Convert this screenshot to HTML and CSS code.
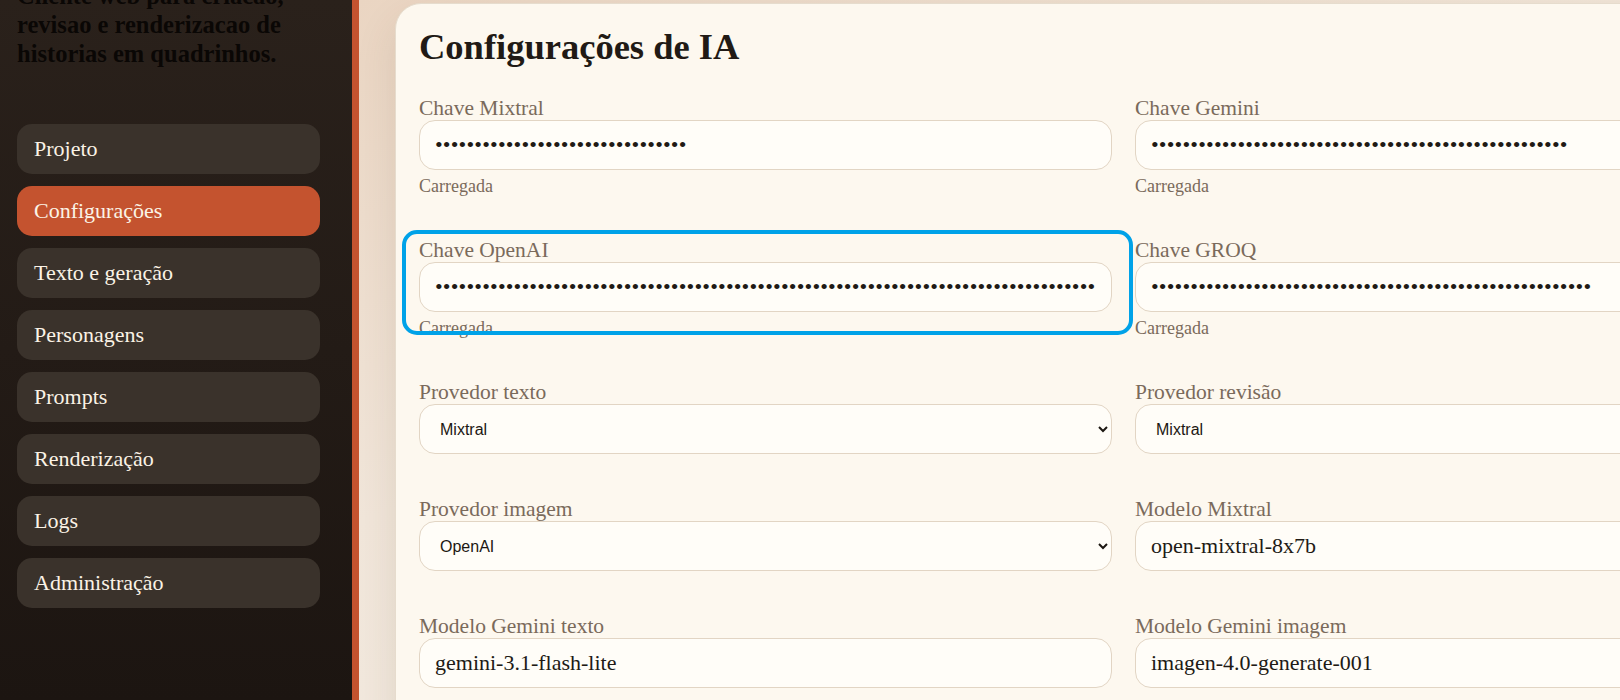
FILE: index.html
```html
<!DOCTYPE html>
<html lang="pt-BR">
<head>
  <meta charset="UTF-8" />
  <meta name="viewport" content="width=device-width, initial-scale=1.0"/>
  <title>Configurações - Quadrinhos</title>
  <link rel="stylesheet" href="styles.css">
</head>
<body>
  <div class="app">
    <aside class="sidebar">
      <p class="intro">Cliente web para criacao, revisao e renderizacao de historias em quadrinhos.</p>

      <nav class="nav">
        <a class="nav-item">Projeto</a>
        <a class="nav-item active">Configurações</a>
        <a class="nav-item">Texto e geração</a>
        <a class="nav-item">Personagens</a>
        <a class="nav-item">Prompts</a>
        <a class="nav-item">Renderização</a>
        <a class="nav-item">Logs</a>
        <a class="nav-item">Administração</a>
      </nav>
    </aside>

    <main class="main">
      <section class="card">
        <h2>Configurações de IA</h2>

        <div class="grid">
          <div class="field">
            <label>Chave Mixtral</label>
            <input type="password" value="aaaaaaaaaaaaaaaaaaaaaaaaaaaaaaaa">
            <span class="hint">Carregada</span>
          </div>
          <div class="field">
            <label>Chave Gemini</label>
            <input type="password" value="aaaaaaaaaaaaaaaaaaaaaaaaaaaaaaaaaaaaaaaaaaaaaaaaaaaaa">
            <span class="hint">Carregada</span>
          </div>

          <div class="field marked">
            <label>Chave OpenAI</label>
            <input type="password" value="aaaaaaaaaaaaaaaaaaaaaaaaaaaaaaaaaaaaaaaaaaaaaaaaaaaaaaaaaaaaaaaaaaaaaaaaaaaaaaaaaaaaaaaaaaaaaaaaaaaaaaaaaaaaaaaaaaaaaaaaaa">
            <span class="hint">Carregada</span>
          </div>
          <div class="field">
            <label>Chave GROQ</label>
            <input type="password" value="aaaaaaaaaaaaaaaaaaaaaaaaaaaaaaaaaaaaaaaaaaaaaaaaaaaaaaaa">
            <span class="hint">Carregada</span>
          </div>

          <div class="field">
            <label>Provedor texto</label>
            <select>
              <option selected>Mixtral</option>
              <option>Gemini</option>
              <option>OpenAI</option>
              <option>GROQ</option>
            </select>
          </div>
          <div class="field">
            <label>Provedor revisão</label>
            <select>
              <option selected>Mixtral</option>
              <option>Gemini</option>
              <option>OpenAI</option>
              <option>GROQ</option>
            </select>
          </div>

          <div class="field">
            <label>Provedor imagem</label>
            <select>
              <option selected>OpenAI</option>
              <option>Gemini</option>
            </select>
          </div>
          <div class="field">
            <label>Modelo Mixtral</label>
            <input type="text" value="open-mixtral-8x7b">
          </div>

          <div class="field">
            <label>Modelo Gemini texto</label>
            <input type="text" value="gemini-3.1-flash-lite">
          </div>
          <div class="field">
            <label>Modelo Gemini imagem</label>
            <input type="text" value="imagen-4.0-generate-001">
          </div>
        </div>
      </section>
    </main>
  </div>
</body>
</html>
```

FILE: styles.css
```css
* {
  box-sizing: border-box;
}

body {
  margin: 0;
  height: 100vh;
  overflow: hidden;
  font-family: 'Liberation Serif', serif;
  color: #211a15;
  background: #f2e9de;
}

.app {
  display: flex;
  height: 100vh;
}

.sidebar {
  flex: 0 0 359px;
  padding: 0 32px 0 17px;
  background: linear-gradient(180deg, #2a211b, #1c1511);
  border-right: 7px solid #c4532f;
}

.intro {
  margin: -19px 0 56px;
  font-size: 24.5px;
  line-height: 29px;
  font-weight: bold;
  color: #0a0705;
}

.nav {
  display: flex;
  flex-direction: column;
  gap: 12px;
}

.nav-item {
  display: flex;
  align-items: center;
  height: 50px;
  padding: 0 17px;
  border-radius: 15px;
  background: #3a322b;
  color: #fbf3e6;
  font-size: 22px;
  cursor: pointer;
}

.nav-item.active {
  background: #c4532f;
}

.main {
  flex: 1;
  min-width: 0;
  overflow: hidden;
  padding: 3px 0 0 36px;
  background: linear-gradient(160deg, #ead5c2 0%, #f1e6da 45%, #f4eee5 100%);
}

.card {
  width: 1460px;
  min-height: 900px;
  padding: 23px 23px;
  background: #fdf8ef;
  border: 1px solid #e6dccd;
  border-radius: 26px;
  box-shadow: 0 18px 40px rgba(90, 60, 30, 0.12);
}

h2 {
  margin: 0 0 29px;
  font-size: 36.5px;
  line-height: 40px;
  font-weight: bold;
  color: #211a15;
}

.grid {
  display: grid;
  grid-template-columns: 693px 693px;
  column-gap: 23px;
  row-gap: 43px;
}

.field {
  position: relative;
  display: flex;
  flex-direction: column;
}

label {
  font-size: 21.5px;
  line-height: 24px;
  color: #7a6a5b;
}

input,
select {
  width: 100%;
  height: 50px;
  padding: 0 15px;
  border: 1px solid #e2d5c4;
  border-radius: 16px;
  background: #fffdf8;
  color: #211a15;
  font-family: 'Liberation Serif', serif;
  font-size: 22px;
  outline: none;
}

input[type="password"] {
  letter-spacing: 0.16px;
}

select {
  padding: 0 11px 0 16px;
  font-family: 'Liberation Sans', sans-serif;
  font-size: 16px;
  color: #1c1712;
}

.hint {
  margin-top: 7px;
  font-size: 18px;
  line-height: 18px;
  color: #7a6a5b;
}

/* destaque azul em volta do campo */
.marked::after {
  content: "";
  position: absolute;
  top: -8px;
  left: -17px;
  right: -21px;
  height: 97px;
  border: 4px solid #00a2e8;
  border-radius: 15px;
  pointer-events: none;
}
```
